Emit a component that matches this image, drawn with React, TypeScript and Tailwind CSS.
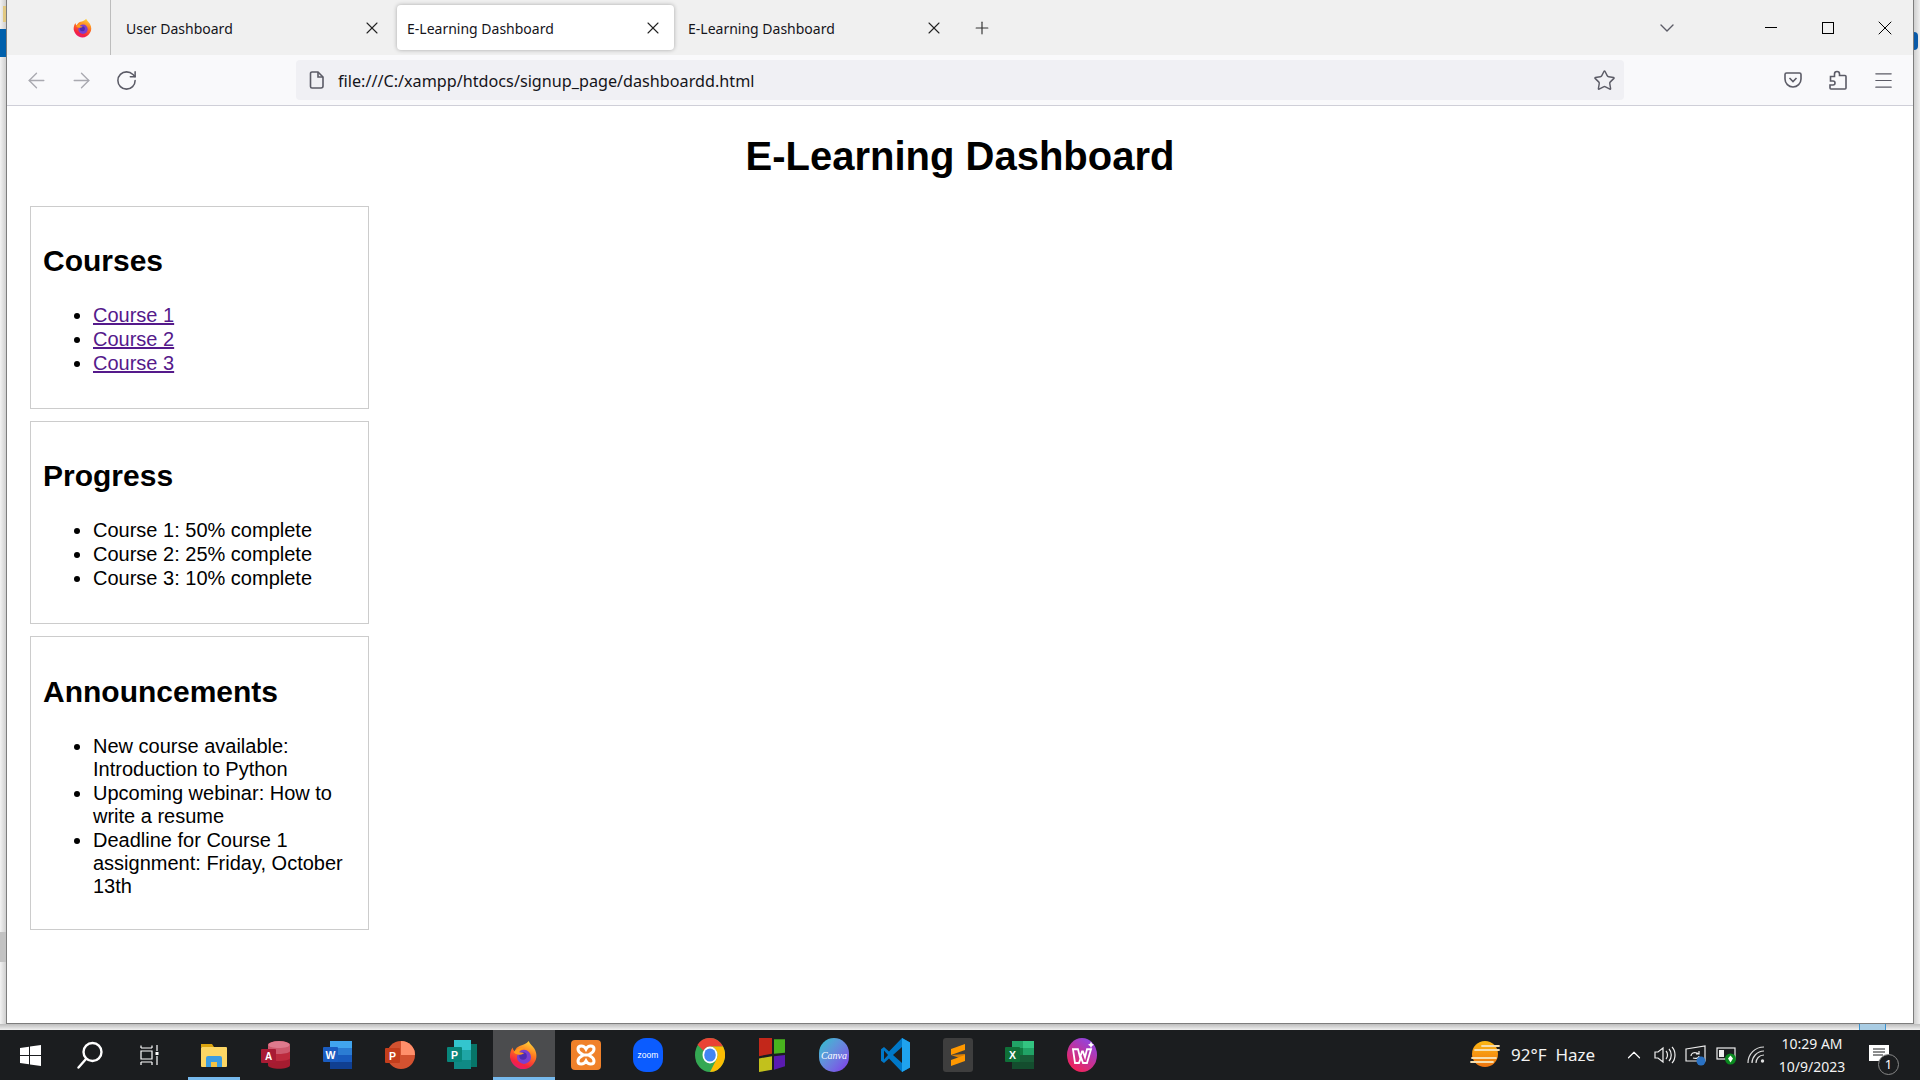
import { ArrowLeft, ArrowRight, ChevronDown, ChevronUp, Menu, Plus, RotateCw, Star, X } from 'lucide-react';
import type { ReactNode } from 'react';

const uiFont = "font-['Noto_Sans','Open_Sans',sans-serif]";

function Firefox({ size = 30 }: { size?: number }) {
  return (
    <svg width={size} height={size} viewBox="0 0 32 32">
      <defs>
        <linearGradient id="ffBody" x1="0.7" y1="0" x2="0.3" y2="1">
          <stop offset="0" stopColor="#ffd43a" />
          <stop offset="0.4" stopColor="#ff7a1f" />
          <stop offset="0.8" stopColor="#f5233f" />
          <stop offset="1" stopColor="#e3197a" />
        </linearGradient>
      </defs>
      <path d="M21 1c1 3 4 5 6 8 3 5 3 11 0 15-3 5-7 7-12 7C8 31 2 25 1 18c0-4 1-8 3-10 0 2 1 3 2 4 1-3 3-5 6-6 3-1 7-2 9-5z" fill="url(#ffBody)" />
      <circle cx="16" cy="18" r="7.5" fill="#7b3fd0" />
      <circle cx="15" cy="17" r="4" fill="#4f2bb0" />
      <path d="M5 13c3-4 8-5 11-4-3 1-5 2-5 4 3 0 5 1 5 1-3 2-7 2-8 1-1 0-2-1-3-2z" fill="#ff9d1e" />
    </svg>
  );
}

function TabSlot({ title, active }: { title: string; active?: boolean }) {
  return (
    <div className="w-[281px] h-full px-[2px] pt-[5px] pb-[5px]">
      <div className={`h-full flex items-center pl-[10px] pr-[11px] rounded-[4px] ${active ? 'bg-white shadow-[0_0_4px_rgba(0,0,0,0.3)]' : ''}`}>
        <span className="mt-[1px] text-[14px] text-[#15141a] flex-1">{title}</span>
        <X size={20} strokeWidth={1.3} className="text-[#222]" />
      </div>
    </div>
  );
}

function Panel({ title, children, tall }: { title: string; children: ReactNode; tall?: boolean }) {
  return (
    <section className="w-[339px] ml-[23px] mb-[12.5px] border border-[#ccc] p-[12px]">
      <h2 className={`text-[30px] font-bold leading-[34.5px] mb-[24.5px] ${tall ? 'mt-[26px]' : 'mt-[25px]'}`}>{title}</h2>
      <ul className={`list-disc pl-[50px] ${tall ? 'mt-[25.5px] mb-[18.5px] leading-[23.4px]' : 'mb-[20.5px] leading-[24px]'}`}>{children}</ul>
    </section>
  );
}

function CourseLink({ children }: { children: ReactNode }) {
  return (
    <li>
      <a href="#course" className="text-[#551a8b] underline">
        {children}
      </a>
    </li>
  );
}

function AppSlot({ children, running, active }: { children: ReactNode; running?: boolean; active?: boolean }) {
  return (
    <div className={`relative w-[62px] h-full flex items-center justify-center ${active ? 'bg-[#4b4c4e]' : ''}`}>
      {children}
      {running && <div className={`absolute bottom-0 h-[3px] bg-[#76b9ed] ${active ? 'inset-x-0' : 'left-[5px] right-[5px]'}`} />}
    </div>
  );
}

const Explorer = () => (
  <svg width="28" height="28" viewBox="0 0 28 28">
    <path d="M1 3h11l2 3H1z" fill="#dba40f" />
    <rect x="1" y="6" width="26" height="20" rx="1" fill="#fcd664" />
    <path d="M6 26v-9a2 2 0 012-2h12a2 2 0 012 2v9h-5v-5h-6v5z" fill="#3c9ce0" />
    <rect x="11" y="21" width="6" height="5" fill="#f5c242" />
  </svg>
);

const Access = () => (
  <svg width="30" height="30" viewBox="0 0 30 30">
    <path d="M7 5c0-5 22-5 22 0v20c0 5-22 5-22 0z" fill="#a51c30" />
    <path d="M7 11c0 4 22 4 22 0v7c0 4-22 4-22 0z" fill="#bd2a3d" />
    <ellipse cx="18" cy="5" rx="11" ry="4" fill="#de7a8d" />
    <path d="M7 5c0 4 22 4 22 0v6c0 4-22 4-22 0z" fill="#ce5a6e" />
    <rect x="0" y="9" width="15" height="14" rx="1" fill="#a81b34" />
    <text x="7.5" y="20" textAnchor="middle" fontSize="10" fontWeight="700" fill="#fff" fontFamily="Liberation Sans">A</text>
  </svg>
);

const Word = () => (
  <svg width="30" height="30" viewBox="0 0 30 30">
    <path d="M7 1h22v7H7z" fill="#41a5ee" />
    <path d="M7 8h22v7H7z" fill="#2b7cd3" />
    <path d="M7 15h22v7H7z" fill="#185abd" />
    <path d="M7 22h22v7H7z" fill="#103f91" />
    <rect x="0" y="7" width="15" height="15" rx="1" fill="#1a5cc0" />
    <text x="7.5" y="18.5" textAnchor="middle" fontSize="10.5" fontWeight="700" fill="#fff" fontFamily="Liberation Sans">W</text>
  </svg>
);

const PowerPoint = () => (
  <svg width="30" height="30" viewBox="0 0 30 30">
    <circle cx="16" cy="15" r="14" fill="#d35230" />
    <path d="M16 1a14 14 0 0114 14H16z" fill="#ff8f6b" />
    <rect x="0" y="8" width="15" height="15" rx="1" fill="#c43e1c" />
    <text x="7.5" y="19.5" textAnchor="middle" fontSize="10.5" fontWeight="700" fill="#fff" fontFamily="Liberation Sans">P</text>
  </svg>
);

const Publisher = () => (
  <svg width="30" height="30" viewBox="0 0 30 30">
    <rect x="20" y="4" width="10" height="23" fill="#077568" />
    <path d="M7 0h17v10H7z" fill="#33c5ce" />
    <path d="M7 10h17v10H7z" fill="#1fa5a6" />
    <path d="M7 20h17v9H7z" fill="#0f8a85" />
    <rect x="0" y="7" width="15" height="15" rx="1" fill="#08867b" />
    <text x="7.5" y="18.5" textAnchor="middle" fontSize="10.5" fontWeight="700" fill="#fff" fontFamily="Liberation Sans">P</text>
  </svg>
);

const Xampp = () => (
  <svg width="30" height="30" viewBox="0 0 30 30">
    <rect width="30" height="30" rx="4" fill="#f0812a" />
    <path d="M15 9c-2-4-8-4-8 0 0 2 2 4 4 5v2c-2 1-4 3-4 5 0 4 6 4 8 0 2 4 8 4 8 0 0-2-2-4-4-5v-2c2-1 4-3 4-5 0-4-6-4-8 0z" fill="none" stroke="#fff" strokeWidth="3" />
    <path d="M11 15h8" stroke="#fff" strokeWidth="3" />
  </svg>
);

const Zoom = () => (
  <div className="w-[30px] h-[34px] rounded-[13px] bg-[#0b5cff] flex items-center justify-center">
    <span className="text-[8.5px] text-white font-['Liberation_Sans',sans-serif]">zoom</span>
  </div>
);

const Chrome = () => (
  <svg width="30" height="34" viewBox="0 0 30 30" preserveAspectRatio="none">
    <circle cx="15" cy="15" r="15" fill="#34a853" />
    <path d="M15 0a15 15 0 0113 7.5H15a7.5 7.5 0 00-6.5 3.75L2.5 6A15 15 0 0115 0z" fill="#ea4335" />
    <path d="M28 7.5A15 15 0 0115 30l6.5-11.25A7.5 7.5 0 0015 7.5z" fill="#fbbc04" />
    <circle cx="15" cy="15" r="7.5" fill="#fff" />
    <circle cx="15" cy="15" r="5.8" fill="#4285f4" />
  </svg>
);

const Tiles = () => (
  <svg width="28" height="34" viewBox="0 0 28 30" preserveAspectRatio="none">
    <path d="M1 0h13v14l-13 2z" fill="#c3271a" />
    <path d="M16 1h11v12l-11 1z" fill="#49b41e" />
    <path d="M1 18l13-2v12l-13 2z" fill="#c2c11c" />
    <path d="M16 16l11-1v10l-11 3z" fill="#5a1bb0" />
  </svg>
);

const Canva = () => (
  <div className="w-[30px] h-[34px] rounded-full bg-gradient-to-br from-[#00c4cc] to-[#7d2ae8] flex items-center justify-center">
    <span className="text-[10px] italic text-white font-['Liberation_Serif',serif]">Canva</span>
  </div>
);

const VSCode = () => (
  <svg width="30" height="34" viewBox="0 0 30 30" preserveAspectRatio="none">
    <path d="M21 0l8 4v22l-8 4-13-12-5 4-3-2v-10l3-2 5 4z" fill="#0078c8" />
    <path d="M21 0l8 4v22l-8 4z" fill="#1fa3ee" />
    <path d="M21 8v14l-9-7z" fill="#1c1e20" />
    <path d="M3 11l4 4-4 4z" fill="#1c1e20" />
  </svg>
);

const Sublime = () => (
  <div className="w-[30px] h-[34px] rounded-[3px] bg-[#3e3e3e] flex items-center justify-center">
    <svg width="16" height="24" viewBox="0 0 16 24">
      <path d="M15 1v6L1 12V6z" fill="#ff9800" />
      <path d="M1 12l14 5v-6z" fill="#d97f06" />
      <path d="M15 12v6L1 23v-6z" fill="#ff9800" />
    </svg>
  </div>
);

const Excel = () => (
  <svg width="30" height="30" viewBox="0 0 30 30">
    <path d="M7 1h11v7H7z" fill="#21a366" />
    <path d="M18 1h11v7H18z" fill="#33c481" />
    <path d="M7 8h11v7H7z" fill="#107c41" />
    <path d="M18 8h11v7H18z" fill="#21a366" />
    <path d="M7 15h22v7H7z" fill="#185c37" />
    <path d="M7 22h22v7H7z" fill="#144d2e" />
    <rect x="0" y="7" width="15" height="15" rx="1" fill="#0f7038" />
    <text x="7.5" y="18.5" textAnchor="middle" fontSize="10.5" fontWeight="700" fill="#fff" fontFamily="Liberation Sans">X</text>
  </svg>
);

const Wps = () => (
  <svg width="30" height="34" viewBox="0 0 30 30" preserveAspectRatio="none">
    <defs>
      <linearGradient id="wpsBg" x1="0.8" y1="0" x2="0.2" y2="1">
        <stop offset="0" stopColor="#8a46e8" />
        <stop offset="1" stopColor="#f8204f" />
      </linearGradient>
    </defs>
    <circle cx="15" cy="15" r="15" fill="url(#wpsBg)" />
    <path d="M6 10h5l2 7 2-5h1l2 5 2-7h4l-4 12h-4l-2-5-2 5h-4z" fill="none" stroke="#fff" strokeWidth="1.8" />
    <path d="M24 3l1 2 2 1-2 1-1 2-1-2-2-1 2-1z" fill="#fff" />
  </svg>
);

const Sun = () => (
  <svg width="32" height="28" viewBox="0 0 32 28">
    <defs>
      <linearGradient id="sunFill" x1="0" y1="0" x2="0" y2="1">
        <stop offset="0" stopColor="#fdb813" />
        <stop offset="1" stopColor="#ee7410" />
      </linearGradient>
    </defs>
    <circle cx="15" cy="13" r="13" fill="url(#sunFill)" />
    <path d="M12 5h17M5 9h24M2 17h24M1 21h22" stroke="#f5deb0" strokeWidth="1.8" strokeLinecap="round" />
  </svg>
);

export default function App() {
  return (
    <div className="w-[1920px] h-[1080px] flex flex-col overflow-hidden bg-white font-['Liberation_Sans',Arial,sans-serif] text-[20px] text-black">
      <div className="h-[1024px] flex">
        <div className="relative w-[6px] bg-gradient-to-r from-[#f2f2f2] to-[#cfcfcf]">
          <div className="absolute left-[3px] right-0 top-[6px] h-[16px] bg-[#e2c982]" />
          <div className="absolute inset-x-0 top-[29px] h-[28px] bg-[#0060ac]" />
          <div className="absolute inset-x-0 top-[932px] h-[30px] bg-[#c2c2c2]" />
        </div>

        <div className="w-[1908px] flex flex-col border-x border-b border-[#7d7d7d]">
          <div className={`h-[55px] flex items-center bg-[#f0f0f0] ${uiFont}`}>
            <div className="w-[104px] h-full flex items-center justify-end pr-[17px] border-r border-[#bdbdbd]">
              <Firefox size={20} />
            </div>
            <div className="ml-[3px] h-full flex">
              <TabSlot title="User Dashboard" />
              <TabSlot title="E-Learning Dashboard" active />
              <TabSlot title="E-Learning Dashboard" />
            </div>
            <Plus size={20} strokeWidth={1.4} className="ml-[15px] text-[#333]" />
            <ChevronDown size={24} strokeWidth={1.4} className="ml-auto mr-[63px] text-[#5b5b66]" />
            <div className="w-[57px] flex justify-center">
              <div className="w-[12px] h-px bg-black" />
            </div>
            <div className="w-[57px] flex justify-center">
              <div className="w-[12px] h-[12px] border border-black" />
            </div>
            <div className="w-[57px] flex justify-center">
              <X size={24} strokeWidth={1} className="text-black" />
            </div>
          </div>

          <div className={`h-[51px] flex items-center bg-[#f9f9fb] border-b border-[#cfcfd8] ${uiFont}`}>
            <ArrowLeft size={25} strokeWidth={1.3} className="ml-[17px] text-[#a9a9b0]" />
            <ArrowRight size={25} strokeWidth={1.3} className="ml-[20px] text-[#a9a9b0]" />
            <RotateCw size={23} strokeWidth={1.6} className="ml-[21px] text-[#5b5b66]" />
            <div className="ml-[158px] w-[1328px] h-[40px] flex items-center bg-[#f0f0f4] rounded-[4px]">
              <svg width="16" height="18" viewBox="0 0 16 18" className="ml-[13px]" fill="none" stroke="#5b5b66" strokeWidth="1.6">
                <path d="M3 1h6l5 5v9a2 2 0 01-2 2H3a1.5 1.5 0 01-1.5-1.5v-13A1.5 1.5 0 013 1z" />
                <path d="M9 1v5h5" />
              </svg>
              <span className="ml-[13px] mt-[2px] text-[16.2px] text-[#15141a]">file:///C:/xampp/htdocs/signup_page/dashboardd.html</span>
              <Star size={23} strokeWidth={1.5} className="ml-auto mr-[8px] text-[#5b5b66]" />
            </div>
            <svg width="18" height="18" viewBox="0 0 18 18" className="ml-[160px]" fill="none" stroke="#5b5b66" strokeWidth="1.6">
              <path d="M2.5 2h13A1.5 1.5 0 0117 3.5V8a8 8 0 01-16 0V3.5A1.5 1.5 0 012.5 2z" />
              <path d="M5.5 7l3.5 3.5L12.5 7" />
            </svg>
            <svg width="18" height="20" viewBox="0 0 18 20" className="ml-[27px]" fill="none" stroke="#5b5b66" strokeWidth="1.6">
              <path d="M8 1.5c1.5 0 2.5 1 2.5 2.5v1.5H16a1 1 0 011 1V18a1 1 0 01-1 1H2a1 1 0 01-1-1v-3h3c1.5 0 2-1 2-2s-.5-2-2-2H1.5V6.5h4V4c0-1.5 1-2.5 2.5-2.5z" />
            </svg>
            <Menu size={23} strokeWidth={1.3} className="ml-[25px] text-[#5b5b66]" />
          </div>

          <main className="flex-1 bg-white">
            <h1 className="text-[40px] font-bold text-center leading-[46px] my-[27px]">E-Learning Dashboard</h1>
            <Panel title="Courses">
              <CourseLink>Course 1</CourseLink>
              <CourseLink>Course 2</CourseLink>
              <CourseLink>Course 3</CourseLink>
            </Panel>
            <Panel title="Progress">
              <li>Course 1: 50% complete</li>
              <li>Course 2: 25% complete</li>
              <li>Course 3: 10% complete</li>
            </Panel>
            <Panel title="Announcements" tall>
              <li>New course available: Introduction to Python</li>
              <li>Upcoming webinar: How to write a resume</li>
              <li>Deadline for Course 1 assignment: Friday, October 13th</li>
            </Panel>
          </main>
        </div>

        <div className="relative w-[6px] bg-gradient-to-r from-[#cfcfcf] to-[#efefef]">
          <div className="absolute left-0 top-[32px] w-[4px] h-[18px] rounded-r-full bg-[#0a5aa8]" />
        </div>
      </div>

      <div className="h-[6px] flex justify-end bg-gradient-to-b from-[#bdbdbd] to-[#f0f0f0]">
        <div className="mr-[34px] w-[27px] h-full bg-[#a9cce3] border-x border-[#3b93d0]" />
      </div>

      <footer className="h-[50px] flex items-center bg-[#1b1d1f] text-white">
        <div className="w-[60px] h-full flex items-center justify-center">
          <svg width="21" height="21" viewBox="0 0 21 21" fill="#fff">
            <path d="M0 3l9-1.3V10H0zM10 1.5L21 0v10H10zM0 11h9v8.3L0 18zM10 11h11v10l-11-1.5z" />
          </svg>
        </div>
        <div className="w-[60px] h-full flex items-center justify-center">
          <svg width="26" height="28" viewBox="0 0 26 28" fill="none" stroke="#fff" strokeWidth="2.4" strokeLinecap="round">
            <circle cx="15.5" cy="11" r="9" />
            <path d="M9 18l-7.5 8.5" />
          </svg>
        </div>
        <div className="w-[60px] h-full flex items-center justify-center">
          <svg width="20" height="20" viewBox="0 0 20 20" fill="none" stroke="#fff" strokeWidth="1.2">
            <path d="M1 3V0.5M12 3V0.5M1 3h11M1 6h11v8H1zM1 17h11M1 17v3M12 17v3M17 0v6M17 11v9" />
            <rect x="15.5" y="7" width="3" height="3" fill="#fff" stroke="none" />
          </svg>
        </div>
        <div className="ml-[3px] h-full flex">
          <AppSlot running><Explorer /></AppSlot>
          <AppSlot><Access /></AppSlot>
          <AppSlot><Word /></AppSlot>
          <AppSlot><PowerPoint /></AppSlot>
          <AppSlot><Publisher /></AppSlot>
          <AppSlot running active><Firefox /></AppSlot>
          <AppSlot><Xampp /></AppSlot>
          <AppSlot><Zoom /></AppSlot>
          <AppSlot><Chrome /></AppSlot>
          <AppSlot><Tiles /></AppSlot>
          <AppSlot><Canva /></AppSlot>
          <AppSlot><VSCode /></AppSlot>
          <AppSlot><Sublime /></AppSlot>
          <AppSlot><Excel /></AppSlot>
          <AppSlot><Wps /></AppSlot>
        </div>

        <div className={`ml-auto h-full flex items-center ${uiFont}`}>
          <Sun />
          <span className="ml-[9px] w-[112px] text-[17px] whitespace-pre text-[#f2f2f2]">92°F  Haze</span>
          <ChevronUp size={22} strokeWidth={1.3} className="mr-[9px]" />
          <svg width="22" height="20" viewBox="0 0 22 20" fill="none" stroke="#eee" strokeWidth="1.2" className="mr-[9px]">
            <path d="M1 7h3l5-4v14l-5-4H1zM12 6c2 2 2 6 0 8M15 4c3 3 3 9 0 12M18 2c4 4 4 12 0 16" />
          </svg>
          <svg width="22" height="22" viewBox="0 0 22 22" fill="none" stroke="#eee" strokeWidth="1.2" className="mr-[9px]">
            <path d="M1 5l19-3v15H1zM6 12c0-3 3-4 6-3l2 1M14 7v3h-3M14 12c0 2-3 3-6 2" />
            <circle cx="16" cy="17" r="4.5" fill="#2a72c4" stroke="none" />
          </svg>
          <svg width="22" height="20" viewBox="0 0 22 20" fill="none" stroke="#eee" strokeWidth="1.2" className="mr-[9px]">
            <rect x="1" y="3" width="18" height="11" />
            <rect x="3" y="5" width="5" height="7" fill="#eee" stroke="none" />
            <circle cx="14.5" cy="14" r="5.5" fill="#0a8a1f" stroke="none" />
            <path d="M14.5 10.5l2.5 3-2.5 4-2.5-4z" fill="#fff" stroke="none" />
          </svg>
          <svg width="22" height="20" viewBox="0 0 22 20" fill="none" stroke="#ddd" strokeWidth="1.2">
            <path d="M1 18c0-9 7-16 16-16M5 18c0-6 5-12 12-12M9 18c0-4 3-8 8-8" />
            <circle cx="15.5" cy="16" r="1.7" fill="#ddd" stroke="none" />
          </svg>
          <div className="ml-[1px] w-[84px] flex flex-col items-center text-[14px] leading-[23px] text-[#f2f2f2]">
            <span>10:29 AM</span>
            <span>10/9/2023</span>
          </div>
          <div className="relative ml-[15px] mr-[31px] w-[20px] h-[20px]">
            <svg width="20" height="20" viewBox="0 0 20 20" fill="#fff">
              <path d="M0 0h20v16H0z" />
              <path d="M4 4h12M4 7h12M4 10h10" stroke="#1b1d1f" strokeWidth="1" />
            </svg>
            <span className="absolute left-[9px] top-[9px] w-[21px] h-[21px] rounded-full border border-[#888] bg-[#1b1d1f] flex items-center justify-center text-[13px] text-white">1</span>
          </div>
        </div>
      </footer>
    </div>
  );
}
